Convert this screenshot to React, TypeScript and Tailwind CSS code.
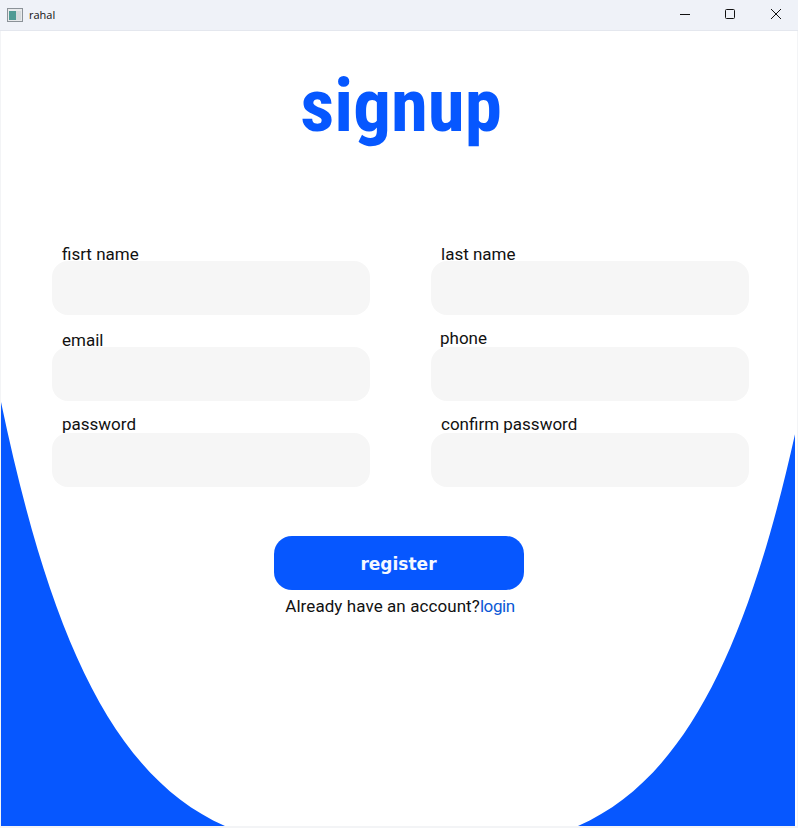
const fields = [
  { label: "fisrt name", labelClass: "ml-[10px] mb-[-3px]" },
  { label: "last name", labelClass: "ml-[10px] mb-[-3px]" },
  { label: "email", labelClass: "ml-[10px] mb-[-3px]" },
  { label: "phone", labelClass: "ml-[9px] mb-[-1px]" },
  { label: "password", labelClass: "ml-[10px] mb-[-1px]" },
  { label: "confirm password", labelClass: "ml-[10px] mb-[-1px]" },
];

function TitleBar() {
  return (
    <div className="flex h-[31px] shrink-0 items-center justify-between border-b border-[#e4e7ee] bg-[#eff2f8] font-['Open_Sans',sans-serif] text-[11px] text-[#111]">
      <div className="flex items-center gap-[6px] pl-[7px]">
        <svg width="16" height="14" viewBox="0 0 16 14">
          <rect x="0.5" y="0.5" width="15" height="13" fill="#e8eaec" stroke="#8b9298" />
          <rect x="2" y="3" width="7" height="9" fill="#4f9a94" />
          <rect x="9" y="3" width="5" height="9" fill="#d5dadd" />
        </svg>
        <span>rahal</span>
      </div>
      <div className="flex items-center self-start">
        <div className="flex h-[28px] w-[46px] items-center justify-center">
          <svg width="10" height="10" viewBox="0 0 10 10">
            <path d="M0 5.5H10" stroke="#111" fill="none" />
          </svg>
        </div>
        <div className="flex h-[28px] w-[44px] items-center justify-center">
          <svg width="10" height="10" viewBox="0 0 10 10">
            <rect x="0.5" y="0.5" width="9" height="9" rx="1" stroke="#111" fill="none" />
          </svg>
        </div>
        <div className="ml-[2px] flex h-[28px] w-[44px] items-center justify-center">
          <svg width="10" height="10" viewBox="0 0 10 10">
            <path d="M0 0L10 10M10 0L0 10" stroke="#111" fill="none" />
          </svg>
        </div>
      </div>
    </div>
  );
}

export default function App() {
  return (
    <div className="flex h-[828px] w-[798px] flex-col overflow-hidden bg-[#f3f4f6]">
      <TitleBar />
      <div className="relative mb-[2px] ml-px mr-px flex-1 bg-white font-['Roboto',sans-serif]">
        {/* corner shapes behind the form */}
        <svg className="absolute inset-0" width="794" height="795" viewBox="0 0 794 795">
          <path
            d="M0 371C48 600 110 745 224 795H0Z M801 371C753 600 691 745 577 795H801Z"
            fill="#0657ff"
          />
        </svg>

        <div className="relative flex flex-col">
          <h1 className="mt-[31px] pl-[4px] text-center text-[75px] font-bold leading-[87px] text-[#0657ff] [font-stretch:75%]">
            signup
          </h1>

          <div className="mt-[95px] grid grid-cols-[318px_318px] gap-x-[61px] gap-y-[13px] pl-[51px]">
            {fields.map((f) => (
              <div key={f.label} className="flex flex-col justify-end">
                <label className={`relative z-10 text-[17px] leading-[20px] text-[#111] ${f.labelClass}`}>
                  {f.label}
                </label>
                <div className="h-[54px] rounded-[16px] bg-[#f6f6f6]" />
              </div>
            ))}
          </div>

          <div className="mt-[49px] flex flex-col items-center pr-[1px]">
            <button className="h-[54px] w-[250px] rounded-[18px] bg-[#0657ff] pt-[3px] font-['DejaVu_Sans',sans-serif] text-[17px] font-bold text-[#f5f8ff]">
              register
            </button>
            <p className="mt-[6px] pl-[3px] text-[17px] leading-[20px] tracking-[0.08px] text-[#111]">
              Already have an account?<a className="tracking-[-0.4px] text-[#0a58d6]">login</a>
            </p>
          </div>
        </div>
      </div>
    </div>
  );
}
